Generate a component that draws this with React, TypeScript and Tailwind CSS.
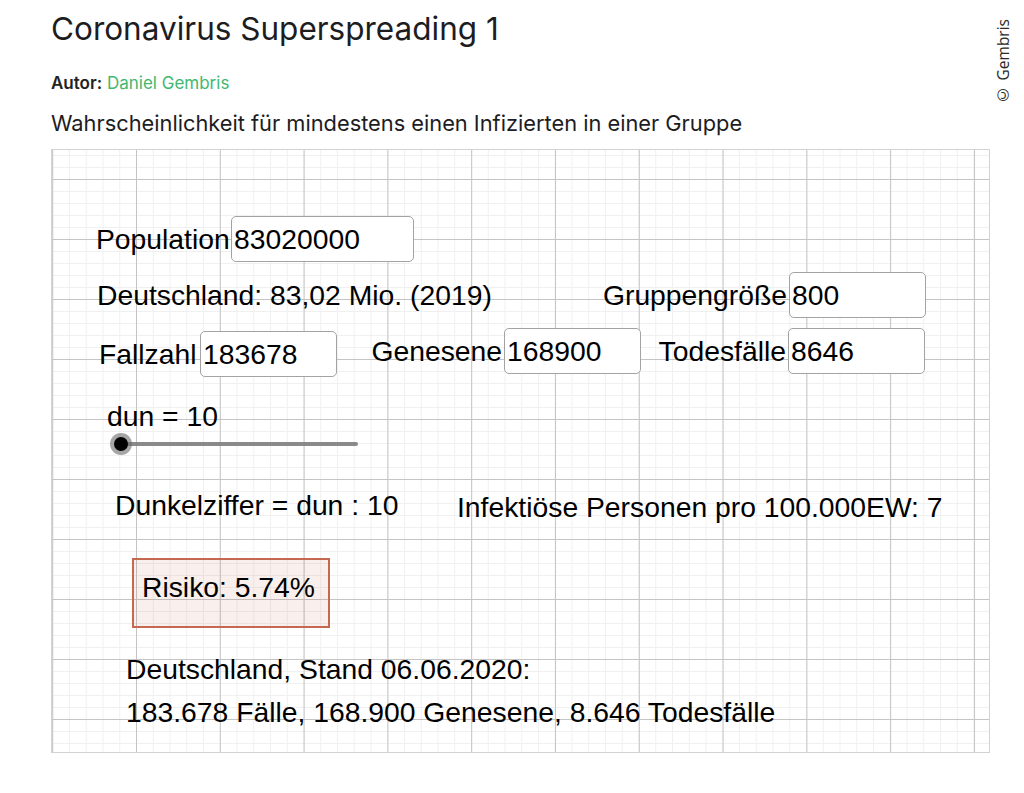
import React from 'react';

const canvasFont = "font-['Liberation_Sans',Arial,sans-serif]";

function Field({ value, w }: { value: string; w: string }) {
  return (
    <input
      readOnly
      value={value}
      className={`${w} h-[46px] rounded-[5px] border border-[#a3a3a3] bg-white pl-[2px] text-[28.3px] leading-none text-black outline-none ${canvasFont}`}
    />
  );
}

function Slider() {
  return (
    <div className="relative ml-[58px] mt-[3px] h-[22px] w-[250px]">
      <div className="absolute left-[10px] top-[9px] h-[4px] w-[238px] rounded-full bg-[#7d7d7d]/90"></div>
      <div className="absolute left-0 top-0 flex h-[22px] w-[22px] items-center justify-center rounded-full bg-[#6b6b6b]/60">
        <div className="h-[14px] w-[14px] rounded-full bg-black"></div>
      </div>
    </div>
  );
}

export default function App() {
  return (
    <div className="relative h-[793px] w-[1024px] overflow-hidden bg-white pl-[51px] font-['Inter',sans-serif] text-[#1d1d1f]">
      {/* Header */}
      <h1 className="pt-[11px] text-[31.5px] font-normal leading-[36px]">
        Coronavirus Superspreading 1
      </h1>
      <div className="mt-[26px] text-[17px] leading-[20px]">
        <span className="font-semibold text-[#222]">Autor:</span>{' '}
        <span className="text-[#3fb870]">Daniel Gembris</span>
      </div>
      <p className="mt-[17px] text-[21.8px] leading-[26px]">
        Wahrscheinlichkeit für mindestens einen Infizierten in einer Gruppe
      </p>

      {/* Applet canvas */}
      <div
        className={`mt-[13px] h-[604px] w-[939px] border border-[#d2d2d2] bg-white bg-[image:linear-gradient(to_right,#c4c4c4_1px,transparent_1px),linear-gradient(to_bottom,#c4c4c4_1px,transparent_1px),linear-gradient(to_right,#f0f0f0_1px,transparent_1px),linear-gradient(to_bottom,#f0f0f0_1px,transparent_1px)] bg-[size:83.8px_60px,83.8px_60px,16.76px_12px,16.76px_12px] bg-[position:84px_29px] text-[28.3px] leading-[28px] text-black ${canvasFont}`}
      >
        <div className="mt-[66px] flex h-[46px] items-center">
          <span className="ml-[44px] w-[135px]">Population</span>
          <Field value="83020000" w="w-[183px]" />
        </div>

        <div className="mt-[10px] flex h-[46px] items-center">
          <span className="ml-[45px] w-[504px]">Deutschland: 83,02 Mio. (2019)</span>
          <span className="w-[186px] text-right">Gruppengröße</span>
          <span className="ml-[2px]"><Field value="800" w="w-[137px]" /></span>
        </div>

        <div className="mt-[10px] flex h-[46px] items-center">
          <div className="flex translate-y-[3px] items-center">
            <span className="ml-[47px] w-[101px]">Fallzahl</span>
            <Field value="183678" w="w-[137px]" />
          </div>
          <span className="w-[165px] text-right">Genesene</span>
          <span className="ml-[2px]"><Field value="168900" w="w-[137px]" /></span>
          <span className="w-[145px] text-right">Todesfälle</span>
          <span className="ml-[2px]"><Field value="8646" w="w-[137px]" /></span>
        </div>

        <div className="ml-[55px] mt-[28px]">dun = 10</div>
        <Slider />

        <div className="mt-[36px] flex items-start">
          <span className="ml-[63px] w-[342px]">Dunkelziffer = dun : 10</span>
          <span className="mt-[2px]">Infektiöse Personen pro 100.000EW: 7</span>
        </div>

        <div className="ml-[80px] mt-[37px] h-[70px] w-[198px] border-2 border-[#c4694f] bg-[#c4694f]/10 pl-[8px] pt-[13px]">
          Risiko: 5.74%
        </div>

        <div className="ml-[74px] mt-[20px] leading-[43px]">
          <div>Deutschland, Stand 06.06.2020:</div>
          <div>183.678 Fälle, 168.900 Genesene, 8.646 Todesfälle</div>
        </div>
      </div>

      {/* Watermark */}
      <div className="absolute left-[993px] top-[19px] rotate-180 font-['Open_Sans',sans-serif] text-[15.5px] leading-[20px] text-[#2a2a2a] [writing-mode:vertical-rl]">
        © Gembris
      </div>
    </div>
  );
}
